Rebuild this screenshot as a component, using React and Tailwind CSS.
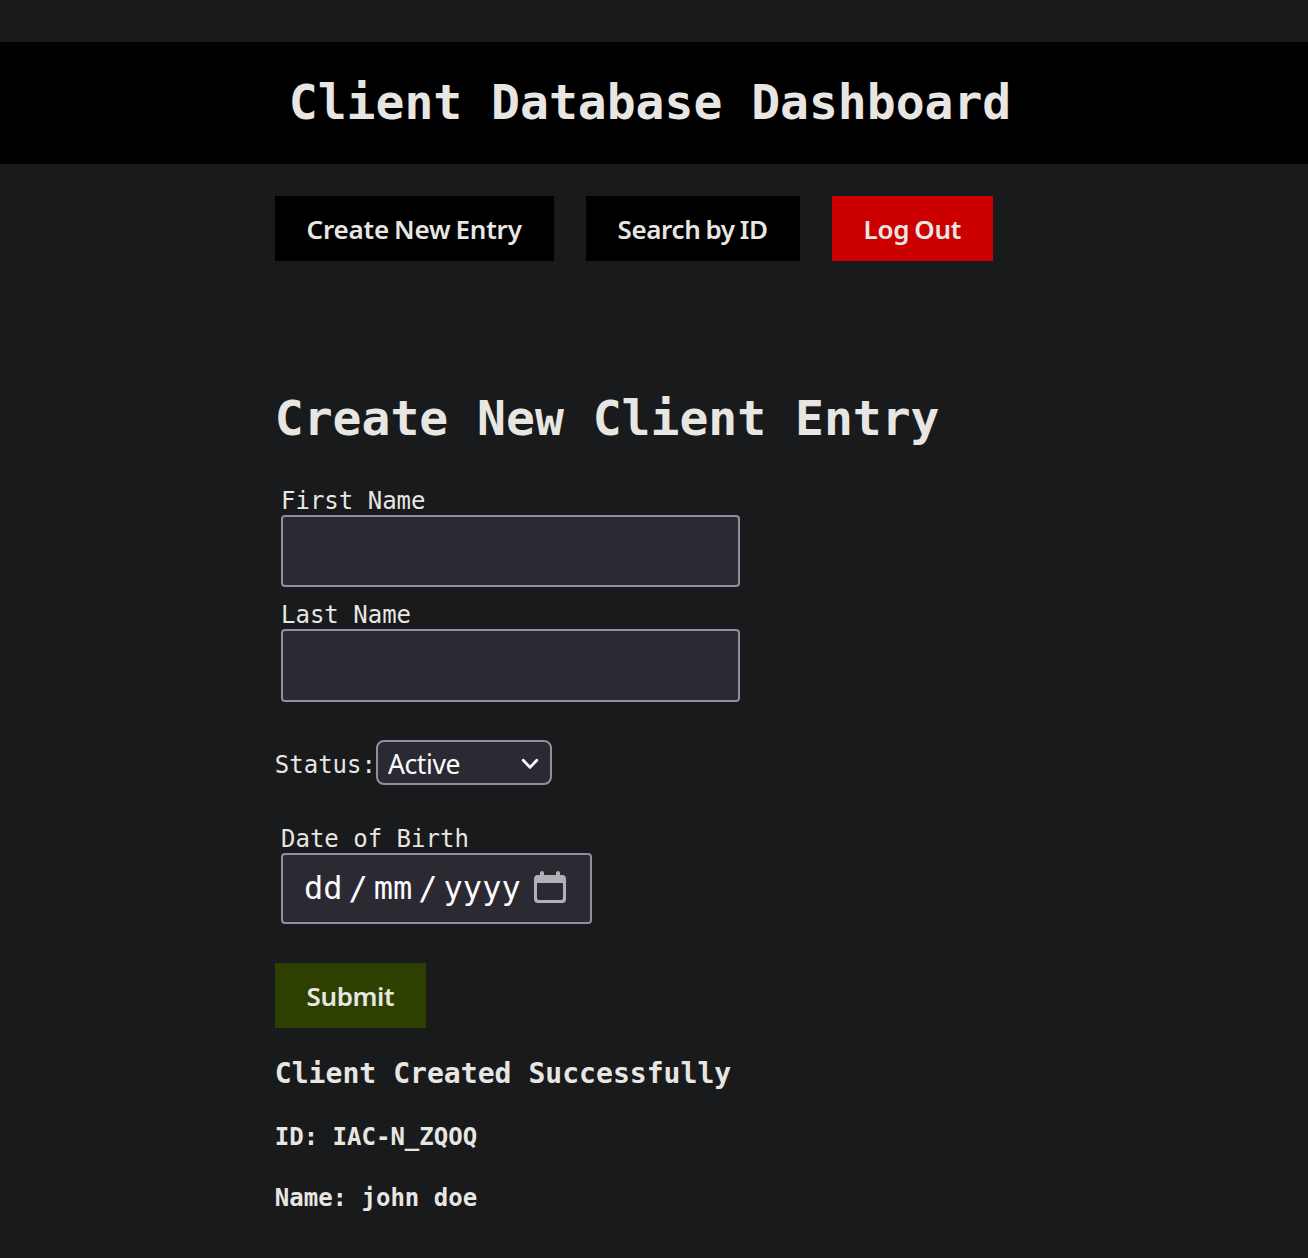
function Field({ label, className }) {
  return (
    <label className="ml-[6px] block w-fit">
      <span className="block h-7 leading-7">{label}</span>
      <input
        type="text"
        className={`block w-[459px] rounded-[4px] border-2 border-[#8f8f9d] bg-[#2b2a33] px-5 text-[32px] text-[#fbfbfe] ${className}`}
      />
    </label>
  );
}

function CalendarIcon() {
  return (
    <svg className="mb-[4px] ml-[13px] h-8 w-8 shrink-0" viewBox="0 0 32 32" fill="#b1b1b5">
      <path
        fillRule="evenodd"
        d="M6 2a2 2 0 0 1 4 0V4h12V2a2 2 0 0 1 4 0V4h2a4 4 0 0 1 4 4v20a4 4 0 0 1-4 4H4a4 4 0 0 1-4-4V8a4 4 0 0 1 4-4h2zM3 12v15a2 2 0 0 0 2 2h22a2 2 0 0 0 2-2V12z"
      />
    </svg>
  );
}

const buttonText =
  "flex h-[65px] items-center pl-[31.6px] font-['Noto_Sans',sans-serif] text-[26px] leading-none font-semibold whitespace-nowrap";

export default function App() {
  return (
    <div className="h-[1258px] overflow-hidden bg-[#181a1b] pt-[42px] font-['DejaVu_Sans_Mono',monospace] text-2xl text-[#e8e6e3]">
      <header className="h-[122px] bg-black pl-[288.8px]">
        <h1 className="text-[48px] leading-[120px] font-bold">Client Database Dashboard</h1>
      </header>
      <main className="pl-[275px]">
        <nav className="flex gap-8 pt-8">
          <button className={`${buttonText} w-[279px] bg-black tracking-[-0.2px] [word-spacing:-1.4px]`}>Create New Entry</button>
          <button className={`${buttonText} w-[214px] bg-black tracking-[-0.4px] [word-spacing:-1.2px]`}>Search by ID</button>
          <button className={`${buttonText} w-[161px] bg-[#cc0000] tracking-[-0.3px] [word-spacing:-1.4px]`}>Log Out</button>
        </nav>
        <h2 className="mt-[129px] -ml-[0.2px] text-[48px] leading-[56px] font-bold">Create New Client Entry</h2>
        <form className="mt-[41px]">
          <Field label="First Name" className="h-[72px]" />
          <div className="h-[14px]" />
          <Field label="Last Name" className="h-[73px]" />
          <div className="mt-[38px] flex h-[45px] items-center">
            <span className="-ml-[0.2px] w-[101.2px] pt-[5px]">Status:</span>
            <button
              type="button"
              className="flex h-[45px] w-[176px] items-center justify-between rounded-[8px] border-2 border-[#8f8f9d] bg-[#2b2a33] pr-[11px] pl-[10px] font-['Noto_Sans',sans-serif] text-[26.5px] leading-none tracking-[-0.4px] text-[#fbfbfe]"
            >
              <span className="pt-[3px]">Active</span>
              <svg className="mt-[2px] h-3 w-[18px]" viewBox="0 0 18 12" fill="none" stroke="#fbfbfe" strokeWidth="2.8" strokeLinecap="round" strokeLinejoin="round">
                <path d="M2.2 2.2L9 9.4l6.8-7.2" />
              </svg>
            </button>
          </div>
          <div className="mt-10 ml-[6px]">
            <span className="block h-7 leading-7">Date of Birth</span>
            <div className="flex h-[71px] w-[311px] items-center rounded-[4px] border-2 border-[#8f8f9d] bg-[#2b2a33] pl-[21px] text-[32px] leading-none text-[#fbfbfe]">
              <div className="mb-[2px] flex gap-[6px]">
                <span>dd</span>
                <span>/</span>
                <span>mm</span>
                <span>/</span>
                <span>yyyy</span>
              </div>
              <CalendarIcon />
            </div>
          </div>
          <button type="button" className={`${buttonText} mt-[39px] w-[151px] bg-[#2d4000] tracking-[-0.4px]`}>
            Submit
          </button>
        </form>
        <h3 className="mt-[29px] -ml-[0.2px] text-[28.08px] leading-[33px] font-bold">Client Created Successfully</h3>
        <p className="mt-[33px] -ml-[0.2px] leading-7 font-bold">ID: IAC-N_ZQOQ</p>
        <p className="mt-[33px] -ml-[0.2px] leading-7 font-bold">Name: john doe</p>
      </main>
    </div>
  );
}
